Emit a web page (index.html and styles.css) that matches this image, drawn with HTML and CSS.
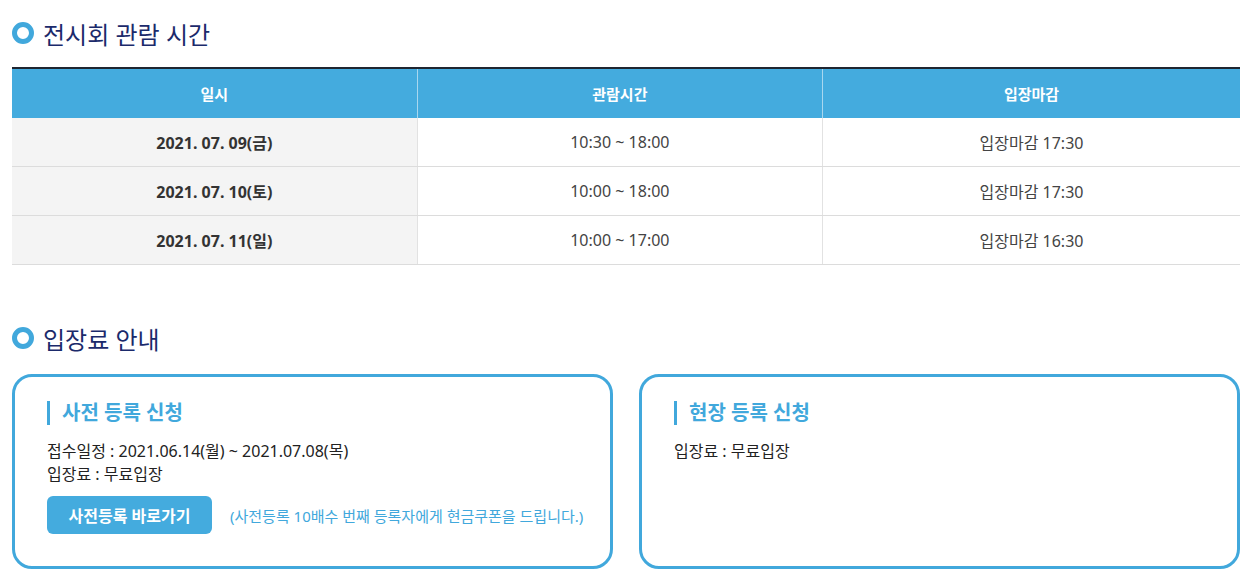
FILE: index.html
```html
<!DOCTYPE html>
<html lang="ko">
<head>
    <meta charset="UTF-8">
    <meta name="viewport" content="width=device-width, initial-scale=1.0">
    <title>전시회 관람 안내</title>
    <link rel="stylesheet" href="styles.css">
</head>
<body>
    <div class="info-wrap">
        <h2 class="sec-title"><span class="dot"></span>전시회 관람 시간</h2>

        <table class="time-table">
            <colgroup>
                <col class="c1">
                <col class="c2">
                <col class="c3">
            </colgroup>
            <thead>
                <tr>
                    <th>일시</th>
                    <th>관람시간</th>
                    <th>입장마감</th>
                </tr>
            </thead>
            <tbody>
                <tr>
                    <td class="day">2021. 07. 09(금)</td>
                    <td>10:30 ~ 18:00</td>
                    <td>입장마감 17:30</td>
                </tr>
                <tr>
                    <td class="day">2021. 07. 10(토)</td>
                    <td>10:00 ~ 18:00</td>
                    <td>입장마감 17:30</td>
                </tr>
                <tr>
                    <td class="day">2021. 07. 11(일)</td>
                    <td>10:00 ~ 17:00</td>
                    <td>입장마감 16:30</td>
                </tr>
            </tbody>
        </table>

        <h2 class="sec-title fee-title"><span class="dot"></span>입장료 안내</h2>

        <div class="fee-boxes">
            <div class="fee-box">
                <h3>사전 등록 신청</h3>
                <p>접수일정 : 2021.06.14(월) ~ 2021.07.08(목)</p>
                <p>입장료 : 무료입장</p>
                <div class="pre-reg">
                    <a href="#" class="reg-button">사전등록 바로가기</a>
                    <span class="reg-note">(사전등록 10배수 번째 등록자에게 현금쿠폰을 드립니다.)</span>
                </div>
            </div>
            <div class="fee-box">
                <h3>현장 등록 신청</h3>
                <p>입장료 : 무료입장</p>
            </div>
        </div>
    </div>
</body>
</html>
```

FILE: styles.css
```css
/* Global Styles */
body {
    margin: 0;
    padding: 0;
    background-color: #fff;
    color: #222;
    font-family: "Noto Sans", "Noto Sans CJK KR", sans-serif;
}

.info-wrap {
    width: 1228px;
    padding: 14px 0 0 12px;
}

.sec-title {
    display: flex;
    align-items: center;
    gap: 9px;
    margin: 0;
    height: 38px;
    font-size: 24px;
    font-weight: 400;
    color: #1b2a6b;
}

.sec-title .dot {
    width: 12px;
    height: 12px;
    border: 5px solid #41a8dc;
    border-radius: 50%;
}

.fee-title {
    margin-top: 54px;
}

/* Table */
.time-table {
    width: 100%;
    margin-top: 15px;
    border-collapse: collapse;
    border-top: 2px solid #1e2530;
    table-layout: fixed;
    font-size: 16px;
}

.time-table .c1,
.time-table .c2 {
    width: 33%;
}

.time-table th {
    height: 49px;
    padding: 0;
    background-color: #44abde;
    color: #fff;
    font-size: 15px;
    font-weight: 700;
    border-left: 1px solid #a9d7ef;
}

.time-table td {
    height: 48px;
    padding: 0;
    text-align: center;
    color: #444;
    border-bottom: 1px solid #dcdcdc;
    border-left: 1px solid #e2e2e2;
}

.time-table th:first-child,
.time-table td:first-child {
    border-left: none;
}

.time-table td.day {
    background-color: #f4f4f4;
    color: #333;
    font-weight: 700;
}

/* Fee boxes */
.fee-boxes {
    display: flex;
    gap: 26px;
    margin-top: 17px;
}

.fee-box {
    flex: 1 1 0;
    min-width: 0;
    box-sizing: border-box;
    height: 195px;
    padding: 24px 32px 0;
    border: 3px solid #41a8dc;
    border-radius: 20px;
}

.fee-box h3 {
    margin: 0 0 15px;
    padding-left: 12px;
    border-left: 3px solid #41a8dc;
    font-size: 20px;
    line-height: 24px;
    font-weight: 700;
    color: #41a8dc;
}

.fee-box p {
    margin: 0;
    font-size: 16px;
    line-height: 23px;
    color: #222;
}

.pre-reg {
    display: flex;
    align-items: center;
    gap: 18px;
    margin-top: 10px;
}

.reg-button {
    display: inline-flex;
    align-items: center;
    justify-content: center;
    flex-shrink: 0;
    width: 165px;
    height: 38px;
    background-color: #44abde;
    color: #fff;
    border-radius: 6px;
    font-size: 16px;
    font-weight: 700;
    text-decoration: none;
}

.reg-note {
    font-size: 15px;
    color: #41a8dc;
    white-space: nowrap;
}
```
